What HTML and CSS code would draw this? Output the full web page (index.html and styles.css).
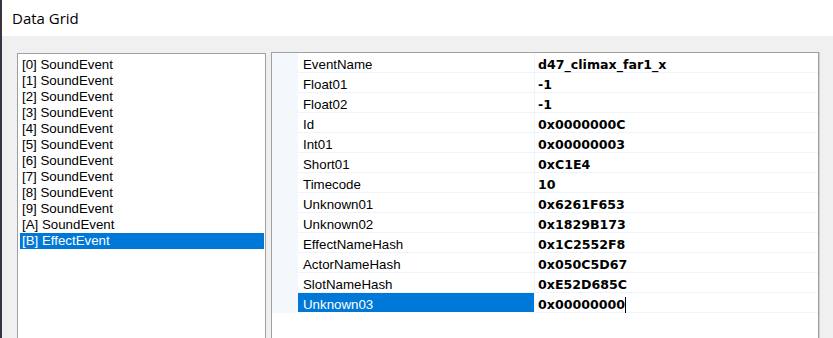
FILE: index.html
```html
<!DOCTYPE html>
<html lang="en">
<head>
  <meta charset="UTF-8" />
  <meta name="viewport" content="width=device-width, initial-scale=1.0"/>
  <title>Data Grid</title>
  <link rel="stylesheet" href="styles.css">
</head>
<body>
  <div class="window">
    <!-- TITLE BAR -->
    <div class="titlebar">Data Grid</div>

    <div class="client">
      <!-- EVENT LIST -->
      <ul class="event-list">
        <li>[0] SoundEvent</li>
        <li>[1] SoundEvent</li>
        <li>[2] SoundEvent</li>
        <li>[3] SoundEvent</li>
        <li>[4] SoundEvent</li>
        <li>[5] SoundEvent</li>
        <li>[6] SoundEvent</li>
        <li>[7] SoundEvent</li>
        <li>[8] SoundEvent</li>
        <li>[9] SoundEvent</li>
        <li>[A] SoundEvent</li>
        <li class="selected">[B] EffectEvent</li>
      </ul>

      <!-- PROPERTY GRID -->
      <div class="prop-grid">
        <div class="prop-row"><span class="gutter"></span><span class="prop-name">EventName</span><span class="prop-value">d47_climax_far1_x</span></div>
        <div class="prop-row"><span class="gutter"></span><span class="prop-name">Float01</span><span class="prop-value">-1</span></div>
        <div class="prop-row"><span class="gutter"></span><span class="prop-name">Float02</span><span class="prop-value">-1</span></div>
        <div class="prop-row"><span class="gutter"></span><span class="prop-name">Id</span><span class="prop-value">0x0000000C</span></div>
        <div class="prop-row"><span class="gutter"></span><span class="prop-name">Int01</span><span class="prop-value">0x00000003</span></div>
        <div class="prop-row"><span class="gutter"></span><span class="prop-name">Short01</span><span class="prop-value">0xC1E4</span></div>
        <div class="prop-row"><span class="gutter"></span><span class="prop-name">Timecode</span><span class="prop-value">10</span></div>
        <div class="prop-row"><span class="gutter"></span><span class="prop-name">Unknown01</span><span class="prop-value">0x6261F653</span></div>
        <div class="prop-row"><span class="gutter"></span><span class="prop-name">Unknown02</span><span class="prop-value">0x1829B173</span></div>
        <div class="prop-row"><span class="gutter"></span><span class="prop-name">EffectNameHash</span><span class="prop-value">0x1C2552F8</span></div>
        <div class="prop-row"><span class="gutter"></span><span class="prop-name">ActorNameHash</span><span class="prop-value">0x050C5D67</span></div>
        <div class="prop-row"><span class="gutter"></span><span class="prop-name">SlotNameHash</span><span class="prop-value">0xE52D685C</span></div>
        <div class="prop-row active"><span class="gutter"></span><span class="prop-name">Unknown03</span><span class="prop-value">0x00000000<span class="caret"></span></span></div>
      </div>
    </div>
  </div>
</body>
</html>
```

FILE: styles.css
```css
:root {
  --desktop: #3b3440;
  --face: #f0f0f0;
  --border: #a0a0a0;
  --line: #f0f3f9;
  --gutter: #f4f7fc;
  --select: #0078d7;
}

* {
  margin: 0;
  padding: 0;
  box-sizing: border-box;
}

html, body {
  height: 338px;
  overflow: hidden;
}

body {
  background-color: var(--desktop);
  padding-left: 2px;
  color: #000;
}

.window {
  height: 338px;
  background-color: var(--face);
  display: flex;
  flex-direction: column;
}

.titlebar {
  height: 36px;
  flex: none;
  background-color: #fff;
  display: flex;
  align-items: center;
  padding-left: 10px;
  font-family: 'Open Sans', 'Noto Sans', sans-serif;
  font-size: 15px;
}

.client {
  flex: 1;
  display: flex;
  align-items: flex-start;
  gap: 5px;
  padding: 16px 0 0 15px;
}

.event-list {
  list-style: none;
  width: 249px;
  height: 285px;
  margin-top: 1px;
  background-color: #fff;
  border: 1px solid var(--border);
  border-bottom: 0;
  padding: 3px 1px 0 2px;
  font-family: 'Liberation Sans', Arial, sans-serif;
  font-size: 13.3px;
  line-height: 16px;
}

.event-list li {
  height: 16px;
  padding-left: 2px;
  white-space: nowrap;
}

.event-list li.selected {
  background-color: var(--select);
  color: #fff;
}

.prop-grid {
  width: 548px;
  height: 286px;
  background-color: #fff;
  border: 1px solid var(--border);
  border-bottom: 0;
  box-shadow: 1px 0 0 #cfcfcf;
}

.prop-row {
  display: flex;
  height: 20px;
}

.gutter {
  width: 26px;
  flex: none;
  background-color: var(--gutter);
}

.prop-name, .prop-value {
  height: 20px;
  padding-top: 4px;
  line-height: 15px;
  border-bottom: 1px solid var(--line);
  white-space: nowrap;
}

.prop-name {
  width: 237px;
  flex: none;
  padding-left: 5px;
  border-right: 1px solid var(--line);
  font-family: 'Liberation Sans', Arial, sans-serif;
  font-size: 13.3px;
}

.prop-value {
  flex: 1;
  padding-left: 3px;
  font-family: 'DejaVu Sans', sans-serif;
  font-weight: bold;
  font-size: 12.6px;
}

.prop-row.active .prop-name {
  background-color: var(--select);
  color: #fff;
  border-bottom-color: #fff;
}

.caret {
  display: inline-block;
  width: 1px;
  height: 16px;
  background-color: #000;
  vertical-align: -4px;
}
```
